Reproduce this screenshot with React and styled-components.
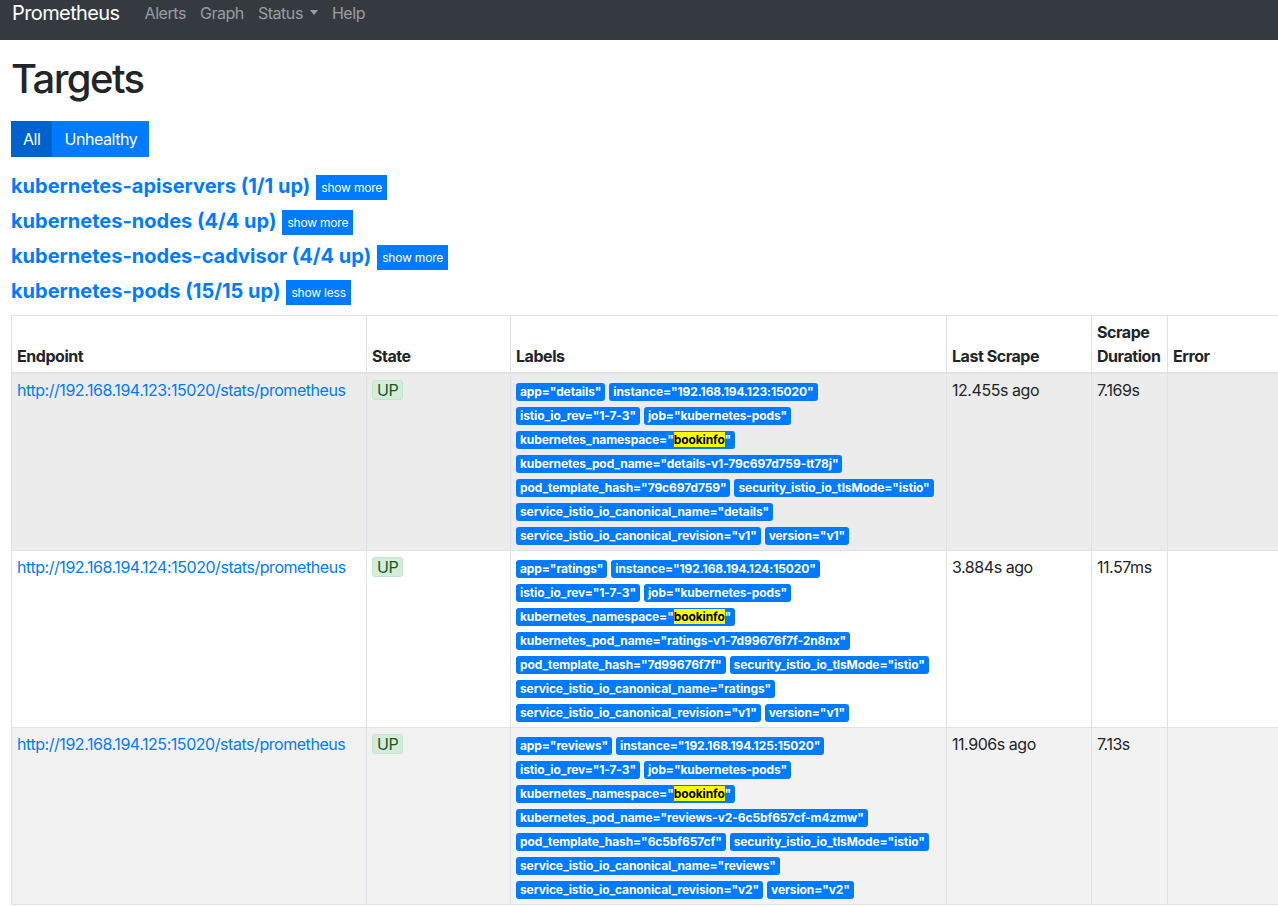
import React from 'react';
import styled, { createGlobalStyle } from 'styled-components';

const GlobalStyle = createGlobalStyle`
  html, body {
    margin: 0;
    padding: 0;
    overflow: hidden;
    background: #fff;
  }
  body {
    font-family: Inter, "Liberation Sans", sans-serif;
    font-size: 16px;
    line-height: 1.5;
    letter-spacing: -0.45px;
    color: #212529;
  }
`;

const Navbar = styled.nav`
  height: 40px;
  background: #343a40;
  display: flex;
  align-items: center;
  padding: 0 12px;
`;

const Brand = styled.a`
  color: #fff;
  font-size: 20px;
  line-height: 24px;
  letter-spacing: -0.6px;
  margin-right: 18px;
  margin-top: -14px;
`;

const NavLink = styled.a`
  color: rgba(255, 255, 255, 0.5);
  font-size: 16px;
  line-height: 24px;
  padding: 0 7px;
  margin-top: -14px;
  display: flex;
  align-items: center;
`;

const Caret = styled.span`
  display: inline-block;
  margin-left: 7px;
  margin-top: -2px;
  border-top: 5px solid rgba(255, 255, 255, 0.5);
  border-left: 4.5px solid transparent;
  border-right: 4.5px solid transparent;
`;

const Main = styled.main`
  padding: 0 11px;
`;

const Title = styled.h1`
  font-size: 40px;
  font-weight: 500;
  line-height: 48px;
  letter-spacing: -1.6px;
  margin: 15px 0 18px;
`;

const FilterGroup = styled.div`
  display: flex;
  margin-bottom: 12px;
`;

const FilterButton = styled.button`
  font-family: inherit;
  font-size: 16px;
  letter-spacing: -0.45px;
  line-height: 24px;
  height: 36px;
  padding: 6px 12px;
  border: 0;
  color: #fff;
  background: ${({ active }) => (active ? '#0062cc' : '#007bff')};
`;

const PoolHeader = styled.div`
  display: flex;
  align-items: center;
  height: 35px;
`;

const PoolTitle = styled.a`
  color: #007bff;
  font-size: 20px;
  font-weight: 700;
  line-height: 25px;
  letter-spacing: 0;
  margin-right: 6px;
`;

const ToggleButton = styled.button`
  font-family: inherit;
  font-size: 12px;
  letter-spacing: -0.2px;
  line-height: 17px;
  height: 25px;
  padding: 4px 5px;
  margin-top: 2px;
  border: 0;
  border-radius: 0;
  color: #fff;
  background: #007bff;
`;

const Table = styled.table`
  width: 1300px;
  table-layout: fixed;
  border-collapse: collapse;
  margin-top: 6px;
`;

const HeadCell = styled.th`
  text-align: left;
  vertical-align: bottom;
  font-weight: 700;
  padding: 4px 5px;
  border: 1px solid #dee2e6;
  border-bottom-width: 2px;
`;

const Row = styled.tr`
  background: ${({ shade }) =>
    shade === 'hover' ? '#ececec' : shade === 'stripe' ? '#f2f2f2' : '#fff'};
`;

const Cell = styled.td`
  vertical-align: top;
  padding: 4px 5px;
  border: 1px solid #dee2e6;
`;

const EndpointLink = styled.a`
  color: #007bff;
  text-decoration: none;
`;

const StateBadge = styled.span`
  display: inline-block;
  background: #d4edda;
  color: #155724;
  border: 1px solid #c3e6cb;
  border-radius: 3px;
  padding: 0 4px;
  line-height: 18px;
`;

const LabelBadge = styled.span`
  display: inline-block;
  background: #007bff;
  color: #fff;
  font-size: 12px;
  font-weight: 700;
  letter-spacing: -0.1px;
  line-height: 1;
  padding: 3px 4px;
  border-radius: 3px;
  margin-right: 4px;
  white-space: nowrap;
`;

const Mark = styled.mark`
  background: #ffff00;
  color: #000;
  padding: 0;
`;

const pools = [
  { name: 'kubernetes-apiservers (1/1 up)', toggle: 'show more' },
  { name: 'kubernetes-nodes (4/4 up)', toggle: 'show more' },
  { name: 'kubernetes-nodes-cadvisor (4/4 up)', toggle: 'show more' },
  { name: 'kubernetes-pods (15/15 up)', toggle: 'show less' },
];

const targets = [
  {
    ip: '192.168.194.123', app: 'details', pod: 'details-v1-79c697d759-tt78j',
    hash: '79c697d759', rev: 'v1', last: '12.455s ago', dur: '7.169s', shade: 'hover',
  },
  {
    ip: '192.168.194.124', app: 'ratings', pod: 'ratings-v1-7d99676f7f-2n8nx',
    hash: '7d99676f7f', rev: 'v1', last: '3.884s ago', dur: '11.57ms', shade: 'none',
  },
  {
    ip: '192.168.194.125', app: 'reviews', pod: 'reviews-v2-6c5bf657cf-m4zmw',
    hash: '6c5bf657cf', rev: 'v2', last: '11.906s ago', dur: '7.13s', shade: 'stripe',
  },
];

function Labels({ t }) {
  return (
    <>
      <LabelBadge>app="{t.app}"</LabelBadge>
      <LabelBadge>instance="{t.ip}:15020"</LabelBadge>
      <LabelBadge>istio_io_rev="1-7-3"</LabelBadge>
      <LabelBadge>job="kubernetes-pods"</LabelBadge>
      <LabelBadge>kubernetes_namespace="<Mark>bookinfo</Mark>"</LabelBadge>
      <LabelBadge>kubernetes_pod_name="{t.pod}"</LabelBadge>
      <LabelBadge>pod_template_hash="{t.hash}"</LabelBadge>
      <LabelBadge>security_istio_io_tlsMode="istio"</LabelBadge>
      <LabelBadge>service_istio_io_canonical_name="{t.app}"</LabelBadge>
      <LabelBadge>service_istio_io_canonical_revision="{t.rev}"</LabelBadge>
      <LabelBadge>version="{t.rev}"</LabelBadge>
    </>
  );
}

export default function App() {
  return (
    <>
      <GlobalStyle />
      <Navbar>
        <Brand>Prometheus</Brand>
        <NavLink>Alerts</NavLink>
        <NavLink>Graph</NavLink>
        <NavLink>Status<Caret /></NavLink>
        <NavLink>Help</NavLink>
      </Navbar>
      <Main>
        <Title>Targets</Title>
        <FilterGroup>
          <FilterButton active>All</FilterButton>
          <FilterButton>Unhealthy</FilterButton>
        </FilterGroup>
        {pools.map((p) => (
          <PoolHeader key={p.name}>
            <PoolTitle>{p.name}</PoolTitle>
            <ToggleButton>{p.toggle}</ToggleButton>
          </PoolHeader>
        ))}
        <Table>
          <colgroup>
            <col style={{ width: 355 }} />
            <col style={{ width: 144 }} />
            <col style={{ width: 436 }} />
            <col style={{ width: 145 }} />
            <col style={{ width: 76 }} />
            <col />
          </colgroup>
          <thead>
            <tr>
              <HeadCell>Endpoint</HeadCell>
              <HeadCell>State</HeadCell>
              <HeadCell>Labels</HeadCell>
              <HeadCell>Last Scrape</HeadCell>
              <HeadCell>Scrape Duration</HeadCell>
              <HeadCell>Error</HeadCell>
            </tr>
          </thead>
          <tbody>
            {targets.map((t) => (
              <Row key={t.ip} shade={t.shade}>
                <Cell>
                  <EndpointLink>http://{t.ip}:15020/stats/prometheus</EndpointLink>
                </Cell>
                <Cell><StateBadge>UP</StateBadge></Cell>
                <Cell><Labels t={t} /></Cell>
                <Cell>{t.last}</Cell>
                <Cell>{t.dur}</Cell>
                <Cell />
              </Row>
            ))}
          </tbody>
        </Table>
      </Main>
    </>
  );
}
